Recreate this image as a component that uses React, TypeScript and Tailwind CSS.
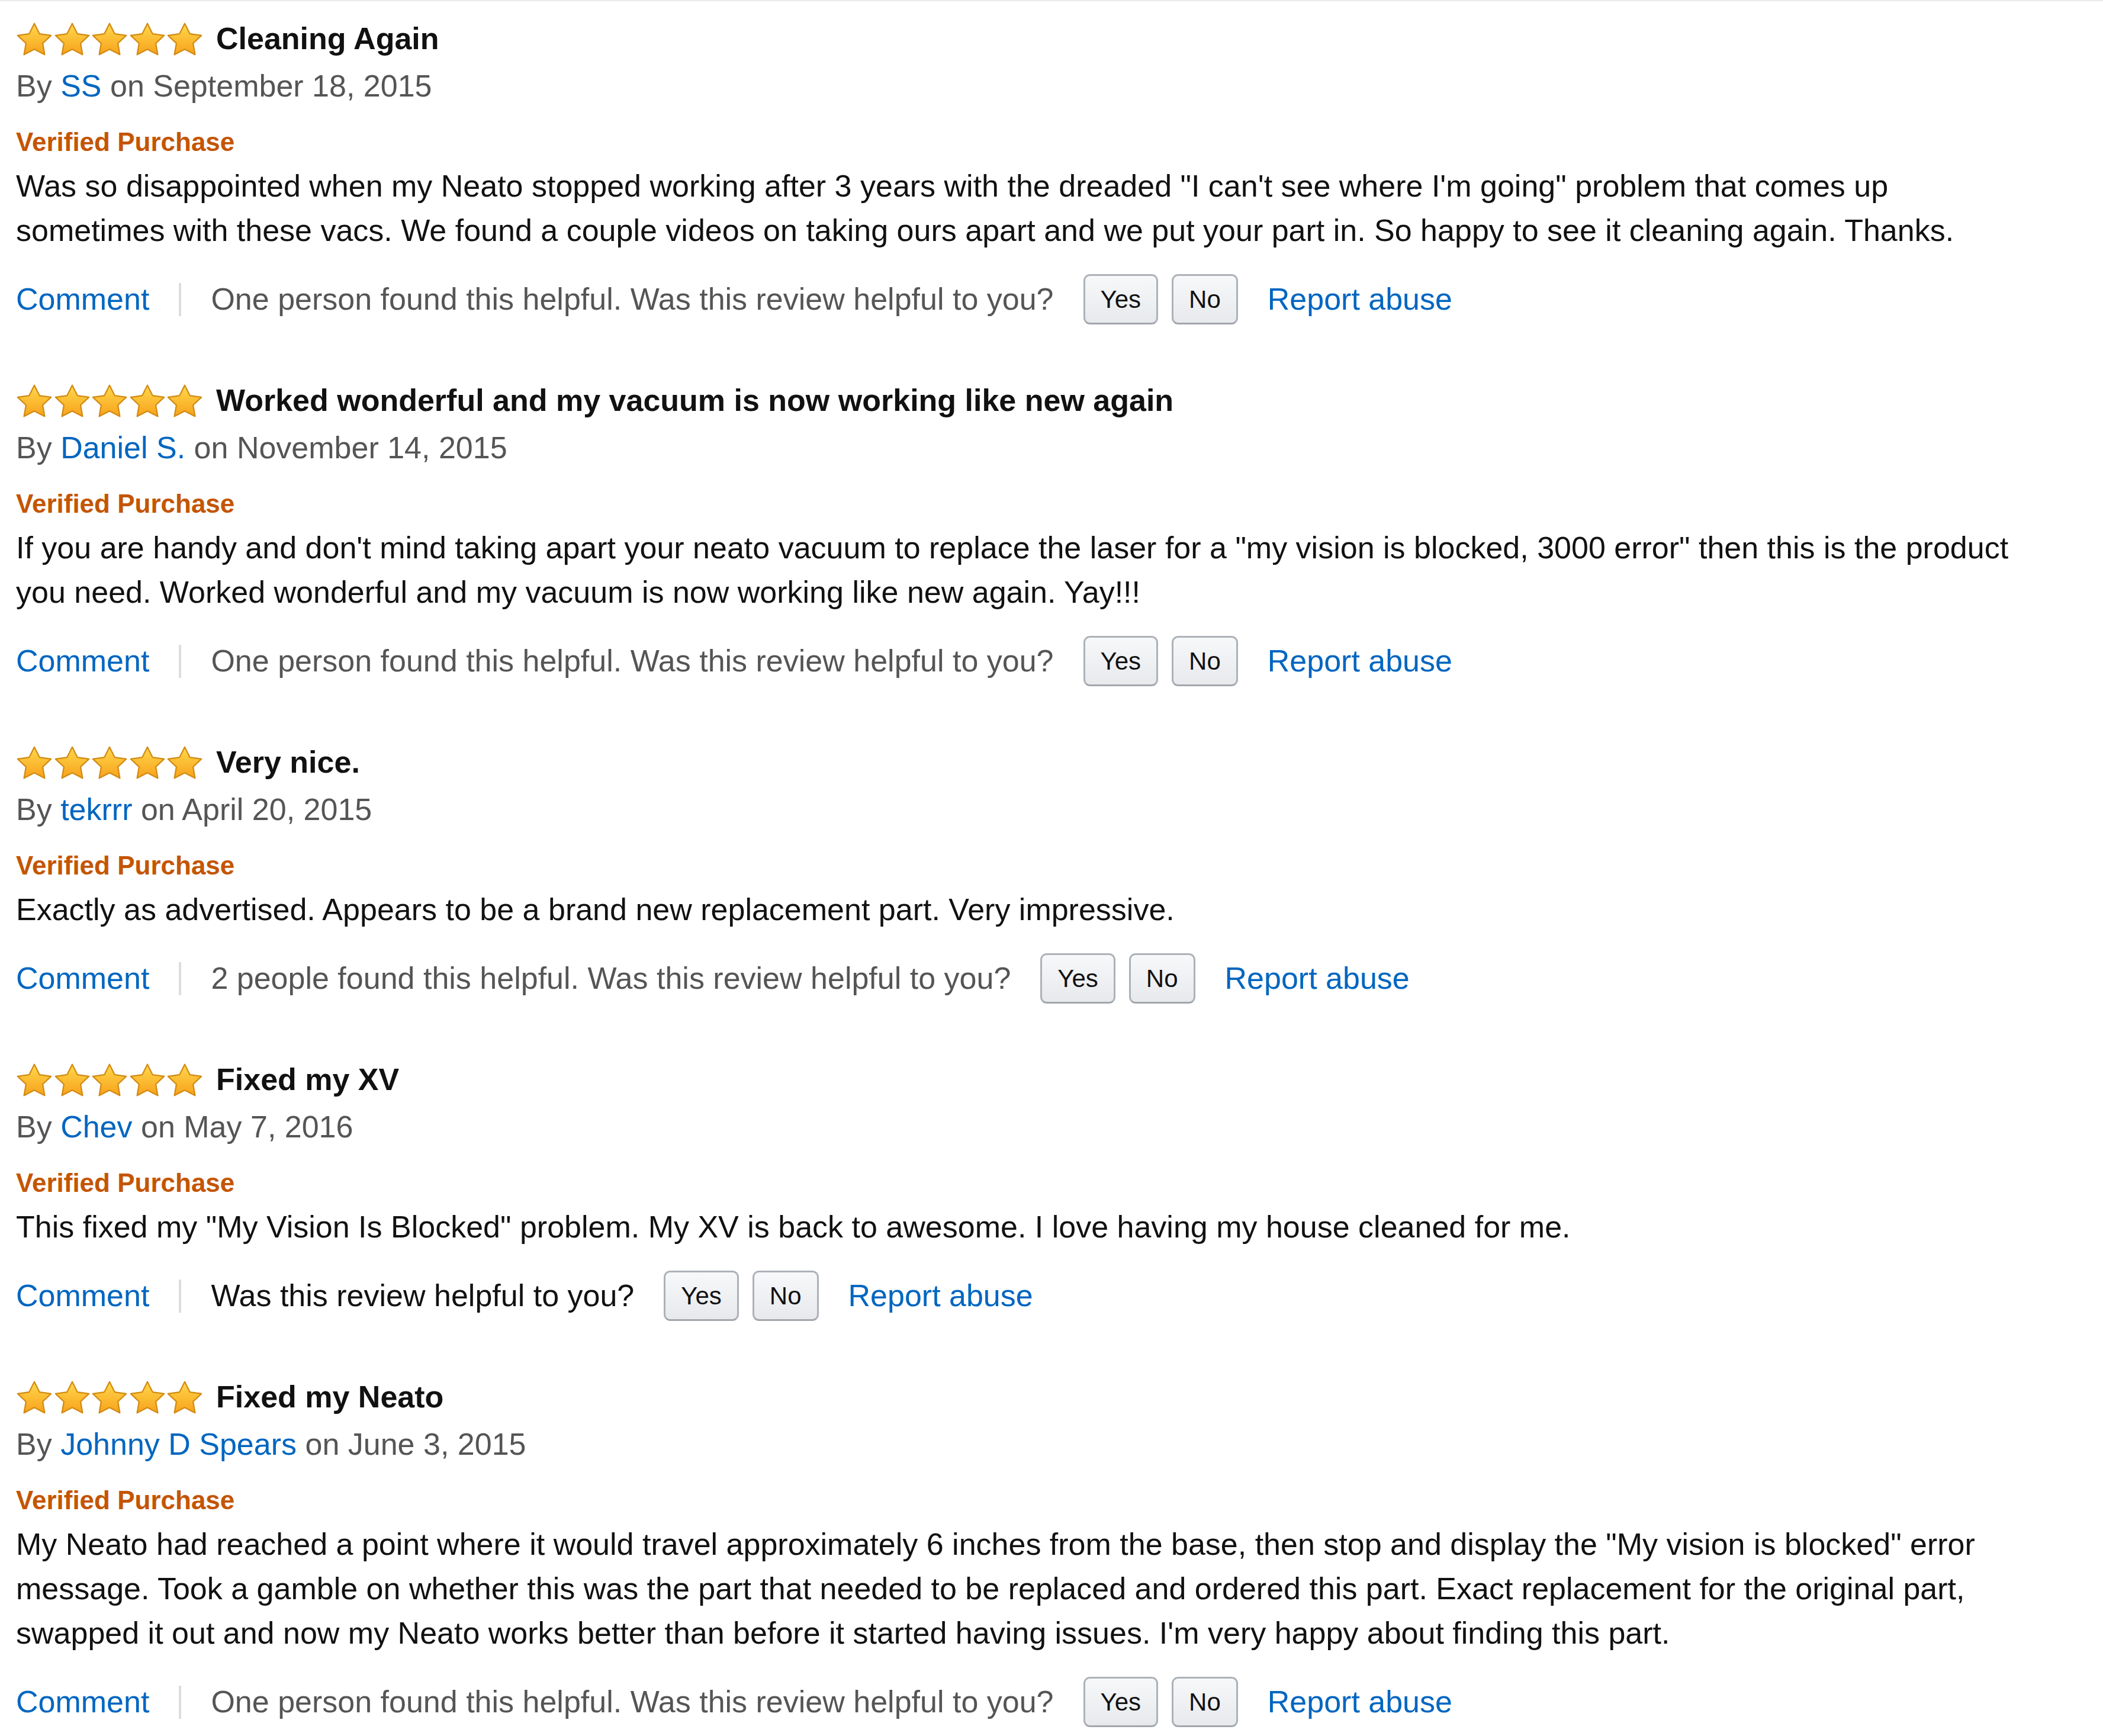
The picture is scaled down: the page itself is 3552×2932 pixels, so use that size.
const reviews = [
  {
    title: 'Cleaning Again',
    author: 'SS',
    date: 'September 18, 2015',
    body: 'Was so disappointed when my Neato stopped working after 3 years with the dreaded "I can\'t see where I\'m going" problem that comes up sometimes with these vacs. We found a couple videos on taking ours apart and we put your part in. So happy to see it cleaning again. Thanks.',
    helpful: 'One person found this helpful.',
  },
  {
    title: 'Worked wonderful and my vacuum is now working like new again',
    author: 'Daniel S.',
    date: 'November 14, 2015',
    body: 'If you are handy and don\'t mind taking apart your neato vacuum to replace the laser for a "my vision is blocked, 3000 error" then this is the product you need. Worked wonderful and my vacuum is now working like new again. Yay!!!',
    helpful: 'One person found this helpful.',
  },
  {
    title: 'Very nice.',
    author: 'tekrrr',
    date: 'April 20, 2015',
    body: 'Exactly as advertised. Appears to be a brand new replacement part. Very impressive.',
    helpful: '2 people found this helpful.',
  },
  {
    title: 'Fixed my XV',
    author: 'Chev',
    date: 'May 7, 2016',
    body: 'This fixed my "My Vision Is Blocked" problem. My XV is back to awesome. I love having my house cleaned for me.',
    helpful: null,
  },
  {
    title: 'Fixed my Neato',
    author: 'Johnny D Spears',
    date: 'June 3, 2015',
    body: 'My Neato had reached a point where it would travel approximately 6 inches from the base, then stop and display the "My vision is blocked" error message. Took a gamble on whether this was the part that needed to be replaced and ordered this part. Exact replacement for the original part, swapped it out and now my Neato works better than before it started having issues. I\'m very happy about finding this part.',
    helpful: 'One person found this helpful.',
  },
];

function Star() {
  return (
    <svg width="62" height="58" viewBox="1 1 22 21" preserveAspectRatio="none">
      <defs>
        <linearGradient id="starFill" x1="0" y1="0" x2="0" y2="1">
          <stop offset="0%" stopColor="#ffd84d" />
          <stop offset="100%" stopColor="#f7a21b" />
        </linearGradient>
      </defs>
      <polygon
        points="12,2 15.09,8.26 22,9.27 17,14.14 18.18,21.02 12,17.77 5.82,21.02 7,14.14 2,9.27 8.91,8.26"
        fill="url(#starFill)"
        stroke="#d38b12"
        strokeWidth="0.8"
        strokeLinejoin="round"
      />
    </svg>
  );
}

function VoteButton({ label }: { label: string }) {
  return (
    <button className="h-[85px] px-[26px] rounded-[11px] border-[3px] border-[#adb1b8] border-b-[#a2a6ac] bg-gradient-to-b from-[#f7f8fa] to-[#e7e9ec] text-[42px] leading-none text-[#111]">
      {label}
    </button>
  );
}

export default function App() {
  return (
    <div className="min-h-screen bg-white border-t-2 border-[#ececec] pt-[26px] pl-[27px] font-['Liberation_Sans',Arial,sans-serif]">
      <div className="max-w-[3400px]">
        {reviews.map((r) => (
          <div key={r.title} className="mb-[91px]">
            <div className="flex items-center h-[75px] mb-[5px]">
              <div className="flex gap-[1.5px]">
                {[0, 1, 2, 3, 4].map((i) => (
                  <Star key={i} />
                ))}
              </div>
              <span className="ml-[22px] text-[52px] leading-[75px] font-bold text-[#111]">{r.title}</span>
            </div>
            <div className="text-[52px] leading-[75px] text-[#555]">
              By <span className="text-[#0066c0]">{r.author}</span> on {r.date}
            </div>
            <div className="mt-[25px] text-[44px] leading-[63px] font-bold text-[#c45500]">Verified Purchase</div>
            <p className="mt-[6px] text-[52px] leading-[75px] text-[#111]">{r.body}</p>
            <div className="mt-[36px] flex items-center h-[85px] text-[52px] leading-[75px]">
              <span className="text-[#0066c0]">Comment</span>
              <span className="mx-[50px] w-[4px] h-[56px] bg-[#dddddd]" />
              {r.helpful ? (
                <span className="text-[#555]">{r.helpful} Was this review helpful to you?</span>
              ) : (
                <span className="text-[#111]">Was this review helpful to you?</span>
              )}
              <div className="ml-[50px] flex gap-[23px]">
                <VoteButton label="Yes" />
                <VoteButton label="No" />
              </div>
              <span className="ml-[50px] text-[#0066c0]">Report abuse</span>
            </div>
          </div>
        ))}
      </div>
    </div>
  );
}
